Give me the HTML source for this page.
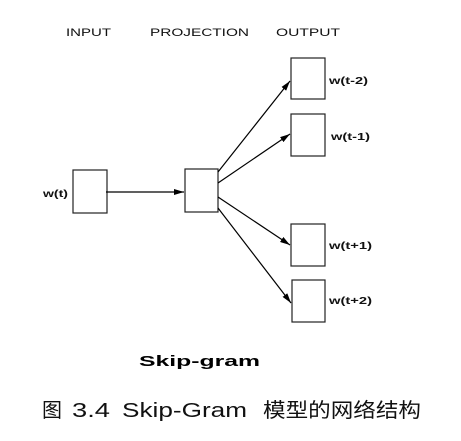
<!DOCTYPE html><html><head><style>body{margin:0;background:#fff;width:461px;height:436px;overflow:hidden}</style></head><body>
<svg width="461" height="436" xmlns="http://www.w3.org/2000/svg" font-family="Liberation Sans, sans-serif">
<defs><marker id="a" markerWidth="10" markerHeight="6" refX="10" refY="3" orient="auto" markerUnits="userSpaceOnUse"><path d="M0,0L10,3L0,6z" fill="#000"/></marker></defs>
<g font-size="11" fill="#111">
<text x="66" y="36" textLength="45" lengthAdjust="spacingAndGlyphs">INPUT</text><text x="150" y="36" textLength="99" lengthAdjust="spacingAndGlyphs">PROJECTION</text><text x="276" y="36" textLength="64" lengthAdjust="spacingAndGlyphs">OUTPUT</text>
</g>
<g fill="#fff" stroke="#222" stroke-width="1.2">
<rect x="73" y="170" width="34" height="43"/><rect x="185" y="169" width="33" height="43"/>
<rect x="291" y="58" width="34" height="41"/><rect x="291" y="114" width="34" height="42"/>
<rect x="291" y="224" width="34" height="42"/><rect x="292" y="280" width="33" height="42"/>
</g>
<g stroke="#000" stroke-width="1.2" marker-end="url(#a)">
<line x1="106" y1="192" x2="184" y2="192"/><line x1="218" y1="172" x2="290" y2="81"/>
<line x1="218" y1="183" x2="290" y2="134"/><line x1="218" y1="197" x2="290" y2="245"/>
<line x1="218" y1="208" x2="291" y2="303"/>
</g>
<g font-size="10" font-weight="bold" fill="#111">
<text x="43" y="197" textLength="25" lengthAdjust="spacingAndGlyphs">w(t)</text><text x="329" y="84" textLength="39" lengthAdjust="spacingAndGlyphs">w(t-2)</text><text x="331" y="140" textLength="39" lengthAdjust="spacingAndGlyphs">w(t-1)</text>
<text x="329" y="249" textLength="43" lengthAdjust="spacingAndGlyphs">w(t+1)</text><text x="329" y="304" textLength="43" lengthAdjust="spacingAndGlyphs">w(t+2)</text>
</g>
<text x="139" y="366" font-size="15" font-weight="bold" textLength="121" lengthAdjust="spacingAndGlyphs">Skip-gram</text>
<g font-size="20" fill="#111" font-family="Liberation Sans, Noto Sans CJK SC, sans-serif">
<text x="42" y="417">图</text>
<text x="72" y="417" textLength="38" lengthAdjust="spacingAndGlyphs">3.4</text>
<text x="122" y="417" textLength="125" lengthAdjust="spacingAndGlyphs">Skip-Gram</text>
<text x="263" y="417" textLength="158" lengthAdjust="spacingAndGlyphs">模型的网络结构</text>
</g>
</svg></body></html>
